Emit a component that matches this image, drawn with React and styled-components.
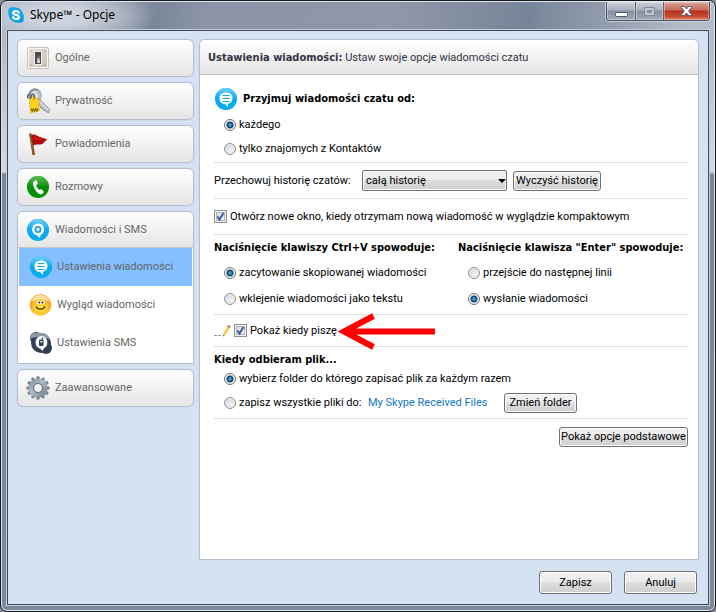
import React from "react";
import styled, { createGlobalStyle, css } from "styled-components";

const GlobalStyle = createGlobalStyle`
  * { box-sizing: border-box; }
  body {
    margin: 0;
    background: #8b8f96;
    font-family: Roboto, "Liberation Sans", sans-serif;
    font-size: 11px;
    line-height: 14px;
    color: #000;
  }
`;

const boldFont = css`
  font-family: "DejaVu Sans Condensed", "DejaVu Sans", sans-serif;
  font-weight: 700;
`;

const Window = styled.div`
  display: flex;
  flex-direction: column;
  min-height: 100vh;
  padding: 0 6px 6px 6px;
  border: 1px solid #15181d;
  border-radius: 7px;
  box-shadow: inset 0 0 0 1px #dfe5ee;
  background: linear-gradient(180deg, #a9b0bf 0, #b9bec9 60px, #d5d8e0 171px, #78859a 173px, #7b899d 100%);
`;

const TitleBar = styled.header`
  display: flex;
  align-items: flex-start;
  justify-content: space-between;
  height: 28px;
  margin: 1px -5px 0;
  padding-left: 6px;
  border-radius: 5px 5px 0 0;
  background:
    radial-gradient(ellipse 95px 30px at 58px 14px, rgba(225, 230, 240, 0.7) 30%, rgba(225, 230, 240, 0) 100%),
    linear-gradient(100deg, #a6adbc 0%, #8f99aa 17%, #7a8799 22%, #8a94a6 28%, #8f98a9 55%, #778397 74%, #7e8a9d 76%, #909bac 84%, #b5bbc9 96%);
`;

const TitleName = styled.div`
  display: flex;
  align-items: center;
  gap: 6px;
  height: 26px;
`;

const TitleText = styled.h1`
  margin: 0;
  font-family: "Noto Sans", "Open Sans", sans-serif;
  font-size: 12px;
  line-height: 18px;
  font-weight: 400;
`;

const Controls = styled.div`
  display: flex;
  height: 19px;
  margin-right: 4px;
  border: 1px solid #4a5160;
  border-top: 0;
  border-radius: 0 0 4px 4px;
  box-shadow: 0 0 0 1px rgba(225, 230, 240, 0.6);
  overflow: hidden;
`;

const ControlButton = styled.button`
  display: flex;
  align-items: center;
  justify-content: center;
  width: ${(p) => (p.$close ? "46px" : "28px")};
  padding: 0;
  border: 0;
  border-left: ${(p) => (p.$first ? "0" : "1px solid #5b6373")};
  box-shadow: inset 0 0 0 1px rgba(255, 255, 255, 0.35);
  background: ${(p) =>
    p.$close
      ? "linear-gradient(#d9a59b 0, #c9695a 45%, #b5321d 50%, #c64a30 80%, #dd8464 100%)"
      : "linear-gradient(#c9ced9 0, #a9b0be 45%, #8690a2 50%, #a2aab8 100%)"};
`;

const Client = styled.div`
  display: flex;
  flex: 1;
  flex-direction: column;
  padding: 8px 9px 10px 9px;
  border: 1px solid #414a57;
  box-shadow: 0 0 0 1px #c3cedd;
  background: #d5e2f2;
`;

const Columns = styled.div`
  display: flex;
  flex: 1;
  gap: 5px;
`;

const Sidebar = styled.nav`
  display: flex;
  flex: 0 0 177px;
  flex-direction: column;
  gap: 5px;
`;

const card = css`
  border: 1px solid #b4bfd0;
  box-shadow: 0 0 1px #b4bfd0;
`;

const NavButton = styled.button`
  ${card}
  display: flex;
  align-items: center;
  gap: 5px;
  width: 100%;
  height: 38px;
  padding: 0 8px;
  border-radius: 6px;
  background: linear-gradient(#fff, #e5e5e5);
  color: #666;
  font: inherit;
  text-align: left;
`;

const NavGroup = styled.div`
  ${card}
  padding-bottom: 1px;
  border-radius: 6px 6px 1px 1px;
  background: #fff;
`;

const GroupHead = styled(NavButton)`
  height: 36px;
  border: 0;
  border-bottom: 1px solid #c6c6c6;
  border-radius: 5px 5px 0 0;
  box-shadow: none;
`;

const SubButton = styled(NavButton)`
  width: auto;
  min-width: calc(100% - 2px);
  margin: 0 1px;
  padding: 0 10px;
  gap: 4px;
  border: 0;
  border-radius: 0;
  box-shadow: none;
  background: ${(p) => (p.$active ? "#84bfff" : "#fff")};
`;

const Panel = styled.main`
  ${card}
  display: flex;
  flex: 1;
  flex-direction: column;
  border-radius: 6px 6px 1px 1px;
  background: #fff;
`;

const PanelHead = styled.h2`
  height: 35px;
  margin: 0;
  padding: 0 8px;
  border-bottom: 1px solid #c3c3c3;
  border-radius: 5px 5px 0 0;
  background: linear-gradient(#fff, #e5e5e5);
  color: #333344;
  font-size: 11px;
  line-height: 35px;
  font-weight: 400;
  b { ${boldFont} }
`;

const PanelBody = styled.form`
  padding: 0 10px 0 14px;
`;

const Section = styled.section`
  display: flex;
  flex-direction: column;
  padding: ${(p) => p.$pad || "0"};
  border-bottom: 1px solid #e0e0e0;
`;

const Line = styled.div`
  position: relative;
  display: flex;
  align-items: center;
  height: ${(p) => p.$h}px;
  padding-left: ${(p) => p.$indent || 0}px;
`;

const Heading = styled.h3`
  ${boldFont}
  margin: 0;
  font-size: 11px;
  line-height: 14px;
  white-space: nowrap;
`;

const TwoColumns = styled.div`
  display: grid;
  grid-template-columns: 244px 1fr;
`;

const Choice = styled.label`
  display: inline-flex;
  align-items: center;
  gap: 3px;
  white-space: nowrap;
`;

const IconHeading = styled.div`
  display: flex;
  align-items: center;
  gap: 5px;
`;

const Radio = styled.input.attrs({ type: "radio" })`
  appearance: none;
  flex: none;
  width: 12px;
  height: 12px;
  margin: 0;
  border: 1px solid #8e8f8f;
  border-radius: 50%;
  box-shadow: inset 0 0 0 1px #f4f4f4;
  background: radial-gradient(circle at 65% 65%, #f4f4f4 0, #c9cdd1 100%);
  &:checked {
    border-color: #6f7880;
    background: radial-gradient(circle at 50% 50%, #7fd6f5 0, #2a8fc0 1px, #123f63 3px, #1c3c54 3px, #e4e8ea 4px);
  }
`;

const CheckInput = styled.input.attrs({ type: "checkbox" })`
  appearance: none;
  grid-area: 1 / 1;
  width: 13px;
  height: 13px;
  margin: 0;
  border: 1px solid #8e8f8f;
  box-shadow: inset 0 0 0 1px #f4f4f4, inset 0 0 0 2px #aeb3b9;
  background: linear-gradient(135deg, #d0d5da, #f6f6f6);
`;

const CheckBox = styled.span`
  display: grid;
  svg {
    grid-area: 1 / 1;
    visibility: hidden;
    pointer-events: none;
  }
  input:checked + svg { visibility: visible; }
`;

const Button = styled.button`
  height: ${(p) => (p.$tall ? 23 : 20)}px;
  width: ${(p) => (p.$w ? `${p.$w}px` : "auto")};
  padding: 0;
  border: 1px solid #707070;
  border-radius: 3px;
  box-shadow: inset 0 0 0 1px #fcfcfc;
  background: linear-gradient(#f2f2f2 0, #ebebeb 50%, #dddddd 50%, #cfcfcf 100%);
  color: #000;
  font: inherit;
  white-space: nowrap;
`;

const HistoryLabel = styled.label`
  flex: 0 0 148px;
  white-space: nowrap;
`;

const SelectWrap = styled.span`
  position: relative;
  width: 145px;
  margin-right: 6px;
  &::after {
    content: "";
    position: absolute;
    right: 1px;
    top: 9px;
    border: 4px solid transparent;
    border-top-color: #000;
    border-bottom: 0;
    pointer-events: none;
  }
`;

const Select = styled.select`
  appearance: none;
  display: block;
  width: 100%;
  height: 21px;
  padding: 0 3px;
  border: 1px solid #707070;
  border-radius: 2px;
  box-shadow: inset 0 0 0 1px #fafafa;
  background: linear-gradient(#f2f2f2 0, #ebebeb 50%, #dddddd 50%, #cfcfcf 100%);
  color: #000;
  font: inherit;
`;

const FolderChoice = styled.div`
  display: grid;
  grid-template-columns: 144px 136px auto;
  align-items: center;
`;

const FolderLink = styled.a`
  color: #0f78c8;
  text-decoration: none;
  white-space: nowrap;
`;

const Arrow = styled.svg`
  position: absolute;
  left: 122px;
  top: -2px;
  pointer-events: none;
`;

const BasicRow = styled.div`
  display: flex;
  justify-content: flex-end;
  padding-top: 8px;
`;

const Footer = styled.footer`
  display: flex;
  justify-content: flex-end;
  gap: 12px;
  padding: 11px 2px 0 0;
`;

function SkypeLogo() {
  return (
    <svg width="16" height="16" viewBox="0 0 16 16">
      <rect x=".3" y=".3" width="10" height="10" rx="3.500" fill="#19a8e6" />
      <rect x="5.700" y="5.700" width="10" height="10" rx="3.500" fill="#0a9bdc" />
      <circle cx="8" cy="8" r="7.200" fill="#12a5e5" />
      <path d="M10.800 5.600C10.200 4.400 9.200 4 8 4 6.300 4 5.200 4.700 5.200 5.900 5.200 8.500 10.900 7.200 10.900 9.900 10.900 11.200 9.700 12 8 12 6.500 12 5.400 11.400 5 10.200" fill="none" stroke="#fff" strokeWidth="2.200" strokeLinecap="round" />
    </svg>
  );
}

function SwitchIcon() {
  return (
    <svg width="24" height="24" viewBox="0 0 24 24">
      <defs>
        <linearGradient id="sw" x1="0" x2="1" y2="1"><stop stopColor="#e5e1d8" /><stop offset="1" stopColor="#c9c2b6" /></linearGradient>
        <linearGradient id="swk" x2="0" y2="1"><stop stopColor="#3c3c3e" /><stop offset=".45" stopColor="#6d6d70" /><stop offset=".6" stopColor="#b9b9bb" /><stop offset="1" stopColor="#e2e2e2" /></linearGradient>
      </defs>
      <rect x="1.500" y="1.500" width="21" height="21" rx="1.500" fill="#f9f6ef" stroke="#c9c1b4" />
      <rect x="3" y="3" width="18" height="18" fill="url(#sw)" />
      <rect x="8" y="5" width="8" height="14" fill="#f3f1ec" />
      <rect x="9" y="6" width="6" height="12" fill="#4c4c4e" />
      <rect x="11" y="7" width="3" height="10" fill="url(#swk)" />
      <g fill="#888"><circle cx="5" cy="5" r=".6" /><circle cx="19" cy="5" r=".6" /><circle cx="5" cy="19" r=".6" /><circle cx="19" cy="19" r=".6" /></g>
    </svg>
  );
}

function KeysIcon() {
  return (
    <svg width="24" height="26" viewBox="0 0 24 26">
      <path d="M12 13.500l2-2 9.500 10-.5 3-2.500-.5-1.500-2-1.500.5-1-2.500-1.500.3z" fill="#c3c6c9" stroke="#777c82" strokeWidth=".8" />
      <path d="M13.500 13l9 9.500" stroke="#f2f2f2" />
      <circle cx="9" cy="7" r="5.500" fill="#d9dcdf" stroke="#8f959c" strokeWidth="2.600" />
      <path d="M11 3.500c4 1.500 3.500 5 2 7.500" fill="none" stroke="#b7bcc2" strokeWidth="3" />
      <path d="M2.500 10.500c-2-2-1-4 1.500-4.500M5.500 11C4 5.500 8.500 4.500 8.500 9" fill="none" stroke="#484d54" strokeWidth="1.200" />
      <path d="M3.500 12l4-3.500 5 3 .8 11.500-9 2z" fill="#ffd21a" stroke="#e3ac08" strokeWidth=".6" />
      <path d="M7.500 11.500c1.500 0 1-3-.5-4" fill="none" stroke="#5c4a20" />
      <path d="M5 20.500l1.300 3 1-3 1.400 3 1-3.300 1.400 3 1-3" fill="none" stroke="#6b5208" />
    </svg>
  );
}

function FlagIcon() {
  return (
    <svg width="24" height="24" viewBox="0 0 24 24">
      <path d="M5.500 3C9 1.500 11 4 14 5L21.500 7.500C18.500 8.500 17.500 13 13.500 12.500 11 12.300 9 12.500 6.500 13.500z" fill="#ad0707" />
      <path d="M7 4.500c3-1 4 1.500 7 1.500l3 1.500c-3 2-6 .5-9.500.5z" fill="#cf120c" />
      <path d="M3 1.500h2.500L9 23H6.500z" fill="#754315" />
      <path d="M3.800 2L7.500 22.500" stroke="#a8702f" strokeWidth=".8" />
    </svg>
  );
}

function Orb({ size = 24, id, top, bottom, children }) {
  return (
    <svg width={size} height={size} viewBox="0 0 24 24">
      <defs>
        <linearGradient id={id} x2="0" y2="1"><stop stopColor={top} /><stop offset="1" stopColor={bottom} /></linearGradient>
      </defs>
      <circle cx="12" cy="12" r="11" fill={bottom} />
      <path d="M1 12a11 11 0 0 1 22 0c-6-2-15-2-22 0z" fill={`url(#${id})`} />
      {children}
    </svg>
  );
}

function CallIcon() {
  return (
    <Orb id="call" top="#5fbe55" bottom="#079007">
      <path d="M7.500 6.500l2.200-1.300c.6-.2 1 .1 1.200.6l.8 2.300c.1.600-.1 1-.6 1.300l-1 .6c.5 2.200 1.700 3.900 3.500 5.100l1-.6c.6-.3 1-.2 1.400.2l1.500 1.800c.3.500.3.900-.1 1.300l-1.700 1.400C12 20.500 5.500 12 7.500 6.500z" fill="#fff" />
    </Orb>
  );
}

function MessagesIcon() {
  return (
    <Orb id="messages" top="#74cdf7" bottom="#08abef">
      <path d="M12 5.500a6 6 0 0 1 2.500 11.500l-.5 3-3-2.600A6 6 0 0 1 12 5.500z" fill="#fff" />
      <circle cx="12" cy="11.500" r="2.600" fill="none" stroke="#18a4e4" strokeWidth="1.800" />
    </Orb>
  );
}

function ChatIcon({ id }) {
  return (
    <Orb id={id} top="#74cdf7" bottom="#08abef">
      <path d="M12 5.500c4 0 6.500 2.500 6.500 5.800 0 2.600-1.700 4.700-4.500 5.500v3.200l-3-2.900c-3.500-.3-5.500-2.600-5.500-5.800 0-3.300 2.500-5.800 6.500-5.800z" fill="#fff" />
      <path d="M8.500 8.500h7M8.500 11.500h7M8.500 14.500h7" stroke="#18a4e4" strokeWidth="1.200" />
    </Orb>
  );
}

function SmileIcon() {
  return (
    <svg width="24" height="24" viewBox="0 0 24 24">
      <defs><radialGradient id="smile" cx=".5" cy=".65"><stop stopColor="#ffe33d" /><stop offset=".7" stopColor="#ffc329" /><stop offset="1" stopColor="#f79b16" /></radialGradient></defs>
      <circle cx="11.500" cy="12" r="10.700" fill="url(#smile)" />
      <path d="M2.500 9C4 3.500 8 2 11.500 2S19 3.500 20.500 9C16 5.500 7 5.500 2.500 9z" fill="#ffe1a4" />
      <g fill="#fff"><circle cx="9.800" cy="9.500" r="1.900" /><circle cx="13.800" cy="9.500" r="1.900" /></g>
      <g fill="#34240b"><circle cx="10.200" cy="9.500" r="1" /><circle cx="13.400" cy="9.500" r="1" /></g>
      <path d="M7 13.500c1.500 3.500 7.500 3.500 9 0" fill="none" stroke="#3d2a0c" strokeWidth="1.100" />
    </svg>
  );
}

function SmsIcon() {
  return (
    <svg width="24" height="24" viewBox="0 0 24 24">
      <g fill="#303f55"><circle cx="7" cy="7" r="6" /><circle cx="17" cy="17" r="6" /><circle cx="12" cy="12" r="10" /></g>
      <path d="M1.500 8C1 3 5 1 8.500 2c6-1 11.500 2 12.500 7C14 5 7 5 1.500 8z" fill="#8d9aaa" />
      <path d="M12 5a6.500 6.500 0 0 1 2.800 12.300l-1 2.700-2.500-2.300A6.500 6.500 0 0 1 12 5z" fill="#fff" />
      <rect x="10" y="8.500" width="4.500" height="6.500" rx="1" fill="#303f55" />
      <path d="M13.500 6.500v2" stroke="#303f55" strokeWidth="1.300" />
      <rect x="11.300" y="10" width="2" height="1.500" fill="#fff" />
    </svg>
  );
}

function GearIcon() {
  const teeth = Array.from({ length: 12 }, (_, i) => i * 30);
  return (
    <svg width="24" height="24" viewBox="0 0 24 24">
      <defs><linearGradient id="gear" x2="1" y2="1"><stop stopColor="#7c8796" /><stop offset=".45" stopColor="#b4bcc7" /><stop offset="1" stopColor="#697483" /></linearGradient></defs>
      <g fill="#7b8695">
        {teeth.map((a) => <path key={a} d="M9.500 5L10.800.3h2.400L14.500 5z" transform={`rotate(${a} 12 12)`} />)}
      </g>
      <path d="M12 2.500a9.500 9.500 0 1 0 0 19 9.500 9.500 0 0 0 0-19zm0 5.500a4 4 0 1 1 0 8 4 4 0 0 1 0-8z" fill="url(#gear)" fillRule="evenodd" />
      <circle cx="12" cy="12" r="4.600" fill="none" stroke="#727e8e" strokeWidth="1.400" />
    </svg>
  );
}

function PencilIcon() {
  return (
    <svg width="17" height="14" viewBox="0 0 17 14">
      <path d="M0 11.500h3M4 11.500h3" stroke="#999" />
      <path d="M9 12.500l.5-3L13.500 2l2.500 1-4.300 7.500z" fill="#f5b52c" />
      <path d="M10.500 10L14.500 2.500" stroke="#ffdc7a" />
      <path d="M13.200 2.500l1-1.500 2.300 1-.8 1.700z" fill="#d56148" />
      <path d="M9 12.500l.3-1.700 1.200.7z" fill="#444" />
    </svg>
  );
}

function Check({ defaultChecked, children }) {
  return (
    <Choice>
      <CheckBox>
        <CheckInput defaultChecked={defaultChecked} />
        <svg width="13" height="13" viewBox="0 0 13 13">
          <path d="M3.500 6.500L5.500 9.500 9.500 3" fill="none" stroke="#3b54a0" strokeWidth="1.900" />
        </svg>
      </CheckBox>
      {children}
    </Choice>
  );
}

function RadioChoice({ name, checked, label }) {
  return <Choice><Radio name={name} defaultChecked={checked} />{label}</Choice>;
}

function RadioLine({ h, ...choice }) {
  return <Line $h={h} $indent={10}><RadioChoice {...choice} /></Line>;
}

export default function App() {
  return (
    <>
      <GlobalStyle />
      <Window>
        <TitleBar>
          <TitleName><SkypeLogo /><TitleText>Skype™ - Opcje</TitleText></TitleName>
          <Controls>
            <ControlButton $first aria-label="Minimalizuj">
              <svg width="13" height="13"><rect x=".5" y="7.500" width="12" height="4" rx="1" fill="#fff" stroke="#535967" /></svg>
            </ControlButton>
            <ControlButton disabled aria-label="Maksymalizuj">
              <svg width="13" height="11"><path d="M1.500 1.500h10v8h-10zM4.500 4.500h4v2h-4z" fill="#bfc5cf" stroke="#7f8999" fillRule="evenodd" /></svg>
            </ControlButton>
            <ControlButton $close aria-label="Zamknij">
              <svg width="13" height="12" viewBox="0 0 13 12">
                <path d="M1.500 1.500h3l2 2.500 2-2.500h3v1L8.700 6l2.800 3.500v1h-3l-2-2.500-2 2.500h-3v-1L4.300 6 1.500 2.500z" fill="#fff" stroke="#535967" />
              </svg>
            </ControlButton>
          </Controls>
        </TitleBar>
        <Client>
          <Columns>
            <Sidebar>
              <NavButton><SwitchIcon />Ogólne</NavButton>
              <NavButton><KeysIcon />Prywatność</NavButton>
              <NavButton><FlagIcon />Powiadomienia</NavButton>
              <NavButton><CallIcon />Rozmowy</NavButton>
              <NavGroup>
                <GroupHead><MessagesIcon />Wiadomości i SMS</GroupHead>
                <SubButton $active><ChatIcon id="chatNav" />Ustawienia wiadomości</SubButton>
                <SubButton><SmileIcon />Wygląd wiadomości</SubButton>
                <SubButton><SmsIcon />Ustawienia SMS</SubButton>
              </NavGroup>
              <NavButton><GearIcon />Zaawansowane</NavButton>
            </Sidebar>
            <Panel>
              <PanelHead><b>Ustawienia wiadomości:</b> Ustaw swoje opcje wiadomości czatu</PanelHead>
              <PanelBody>
                <Section $pad="9px 0 1px">
                  <Line $h={29}><IconHeading><ChatIcon id="chatHead" /><Heading>Przyjmuj wiadomości czatu od:</Heading></IconHeading></Line>
                  <RadioLine h={24} name="from" checked label="każdego" />
                  <RadioLine h={24} name="from" label="tylko znajomych z Kontaktów" />
                </Section>
                <Section>
                  <Line $h={35}>
                    <HistoryLabel htmlFor="history">Przechowuj historię czatów:</HistoryLabel>
                    <SelectWrap><Select id="history"><option>całą historię</option></Select></SelectWrap>
                    <Button type="button" $w={88}>Wyczyść historię</Button>
                  </Line>
                </Section>
                <Section>
                  <Line $h={35}><Check defaultChecked>Otwórz nowe okno, kiedy otrzymam nową wiadomość w wyglądzie kompaktowym</Check></Line>
                </Section>
                <Section $pad="0 0 2px">
                  <TwoColumns>
                    <div>
                      <Line $h={25}><Heading>Naciśnięcie klawiszy Ctrl+V spowoduje:</Heading></Line>
                      <RadioLine h={26} name="paste" checked label="zacytowanie skopiowanej wiadomości" />
                      <RadioLine h={26} name="paste" label="wklejenie wiadomości jako tekstu" />
                    </div>
                    <div>
                      <Line $h={25}><Heading>Naciśnięcie klawisza "Enter" spowoduje:</Heading></Line>
                      <RadioLine h={26} name="enter" label="przejście do następnej linii" />
                      <RadioLine h={26} name="enter" checked label="wysłanie wiadomości" />
                    </div>
                  </TwoColumns>
                </Section>
                <Section>
                  <Line $h={31}>
                    <Choice as="div"><PencilIcon /><Check defaultChecked>Pokaż kiedy piszę</Check></Choice>
                    <Arrow width="100" height="37" viewBox="0 0 100 37">
                      <path d="M99 18.500H12M37.500 3L8 18.500 37.500 34" fill="none" stroke="#f00" strokeWidth="6" />
                    </Arrow>
                  </Line>
                </Section>
                <Section $pad="5px 0 3px">
                  <Line $h={15}><Heading>Kiedy odbieram plik...</Heading></Line>
                  <RadioLine h={24} name="file" checked label="wybierz folder do którego zapisać plik za każdym razem" />
                  <Line $h={24} $indent={10}>
                    <FolderChoice>
                      <RadioChoice name="file" label="zapisz wszystkie pliki do:" />
                      <FolderLink href="#folder">My Skype Received Files</FolderLink>
                      <Button type="button" $w={73}>Zmień folder</Button>
                    </FolderChoice>
                  </Line>
                </Section>
                <BasicRow><Button type="button" $w={129}>Pokaż opcje podstawowe</Button></BasicRow>
              </PanelBody>
            </Panel>
          </Columns>
          <Footer>
            <Button type="button" $tall $w={73}>Zapisz</Button>
            <Button type="button" $tall $w={73}>Anuluj</Button>
          </Footer>
        </Client>
      </Window>
    </>
  );
}
